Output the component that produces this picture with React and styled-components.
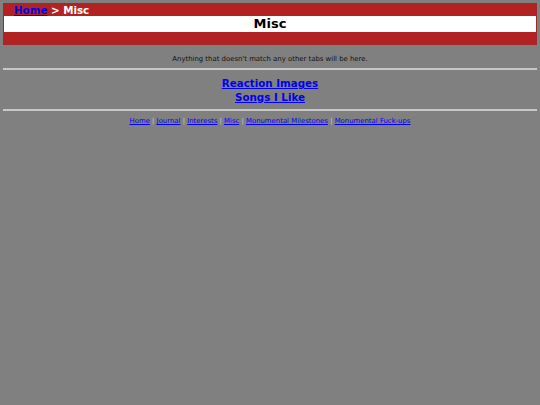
import React from "react";
import styled, { createGlobalStyle } from "styled-components";

const Global = createGlobalStyle`
  html, body { background: #808080; }
  body { margin: 3px; font-family: "DejaVu Sans", Verdana, sans-serif; color: #000; }
`;

const Header = styled.div`
  background: #b22222;
  border: 1px solid #a02828;
  padding-bottom: 12px;
`;

const Crumbs = styled.div`
  color: #fff;
  font-weight: bold;
  font-size: 10.3px;
  line-height: 12px;
  padding-left: 10px;
  a { color: #0000ee; }
`;

const Title = styled.h1`
  margin: 0;
  background: #fff;
  text-align: center;
  font-size: 13px;
  line-height: 16px;
  font-weight: bold;
`;

const Intro = styled.p`
  font-size: 6.9px;
  line-height: 8px;
  text-align: center;
  margin: 10px 0 5px;
  color: #111;
`;

const Rule = styled.hr`
  border: none;
  height: 2px;
  background: #c8c8c8;
  margin: 0;
`;

const Links = styled.div`
  text-align: center;
  padding: 6px 0 5px;
  a {
    display: block;
    color: #0000ee;
    font-weight: bold;
    font-size: 10.3px;
    line-height: 14px;
  }
`;

const Footer = styled.div`
  text-align: center;
  font-size: 6.9px;
  line-height: 8px;
  margin-top: 6px;
  color: #ccc;
  a { color: #0000ee; }
`;

const navItems = ["Home", "Journal", "Interests", "Misc", "Monumental Milestones", "Monumental Fuck-ups"];

export default function App() {
  return (
    <>
      <Global />
      <Header>
        <Crumbs><a href="#">Home</a> &gt; Misc</Crumbs>
        <Title>Misc</Title>
      </Header>
      <Intro>Anything that doesn't match any other tabs will be here.</Intro>
      <Rule />
      <Links>
        <a href="#">Reaction Images</a>
        <a href="#">Songs I Like</a>
      </Links>
      <Rule />
      <Footer>
        {navItems.map((n, i) => (
          <React.Fragment key={n}>
            {i > 0 && " | "}
            <a href="#">{n}</a>
          </React.Fragment>
        ))}
      </Footer>
    </>
  );
}
